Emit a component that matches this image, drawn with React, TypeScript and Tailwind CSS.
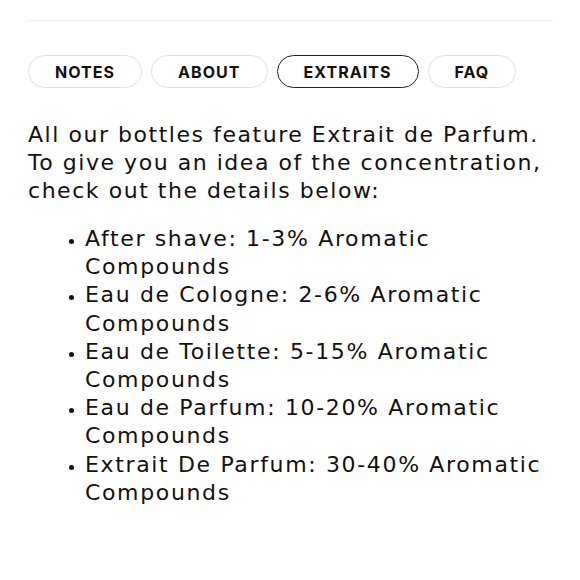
import React from 'react';

const tabs = ['NOTES', 'ABOUT', 'EXTRAITS', 'FAQ'];

const items = [
  'After shave: 1-3% Aromatic Compounds',
  'Eau de Cologne: 2-6% Aromatic Compounds',
  'Eau de Toilette: 5-15% Aromatic Compounds',
  'Eau de Parfum: 10-20% Aromatic Compounds',
  'Extrait De Parfum: 30-40% Aromatic Compounds',
];

export default function App() {
  return (
    <div className="w-[580px] h-[580px] bg-white px-[28px] pt-[20px] text-[#111] font-['Inter',sans-serif]">
      <div className="border-t border-[#eeeeee] w-[525px]" />

      <div className="flex gap-[9px] mt-[34px]">
        {tabs.map((t) => (
          <button
            key={t}
            className={`h-[33px] px-[26px] rounded-full border text-[16px] font-bold tracking-[0.065em] ${
              t === 'EXTRAITS' ? 'border-[#222]' : 'border-[#e4dfd7]'
            }`}
          >
            {t}
          </button>
        ))}
      </div>

      <div className="font-['DejaVu_Sans',sans-serif] text-[22px] tracking-[0.075em]">
        <p className="mt-[33px] leading-[28px] tracking-[0.07em]">
          All our bottles feature Extrait de Parfum.
          <br />
          To give you an idea of the concentration,
          <br />
          check out the details below:
        </p>

        <ul className="mt-[20px] -mr-[12px] list-disc pl-[57px] leading-[28.2px] marker:text-[15px]">
          {items.map((it) => (
            <li key={it}>{it}</li>
          ))}
        </ul>
      </div>
    </div>
  );
}
